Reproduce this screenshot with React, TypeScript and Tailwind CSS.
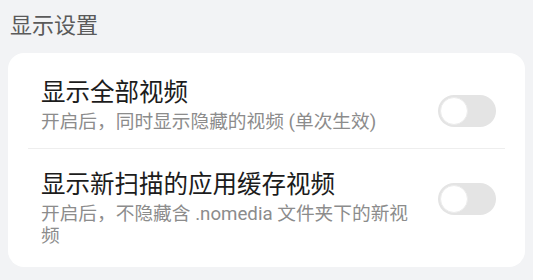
import React from "react";

function Toggle({ className = "" }: { className?: string }) {
  return (
    <div
      className={
        "relative w-[58px] h-[32px] shrink-0 rounded-full bg-[#e4e4e4] " + className
      }
    >
      <div className="absolute left-[2px] top-[2px] w-[28px] h-[28px] rounded-full bg-white border border-[#ececec]" />
    </div>
  );
}

export default function App() {
  return (
    <div
      className="w-[533px] h-[280px] bg-[#f2f3f5] overflow-hidden"
      style={{ fontFamily: 'Roboto, "Noto Sans CJK SC", sans-serif' }}
    >
      <div className="pt-[11px] pl-[10px] text-[22px] leading-[30px] text-[#5a5a5a]">
        显示设置
      </div>
      <div className="mt-[12px] mx-[8px] bg-white rounded-[16px] px-[20px]">
        <div className="flex items-start gap-[22px] pl-[13px] pr-[9px] pt-[24px] pb-[15px] border-b border-[#eeeeee]">
          <div className="flex-1 min-w-0">
            <div className="text-[24.5px] leading-[32px] text-[#1c1c1c]">显示全部视频</div>
            <div className="mt-[2px] text-[18.7px] leading-[22px] text-[#8c8c8c]">
              开启后，同时显示隐藏的视频 (单次生效)
            </div>
          </div>
          <Toggle className="mt-[18px]" />
        </div>
        <div className="flex items-start gap-[22px] pl-[13px] pr-[9px] pt-[20px] pb-[20px]">
          <div className="flex-1 min-w-0">
            <div className="text-[24.5px] leading-[32px] text-[#1c1c1c]">显示新扫描的应用缓存视频</div>
            <div className="mt-[2px] text-[18.7px] leading-[22px] text-[#8c8c8c]">
              开启后，不隐藏含 .nomedia 文件夹下的新视频
            </div>
          </div>
          <Toggle className="mt-[14px]" />
        </div>
      </div>
    </div>
  );
}
